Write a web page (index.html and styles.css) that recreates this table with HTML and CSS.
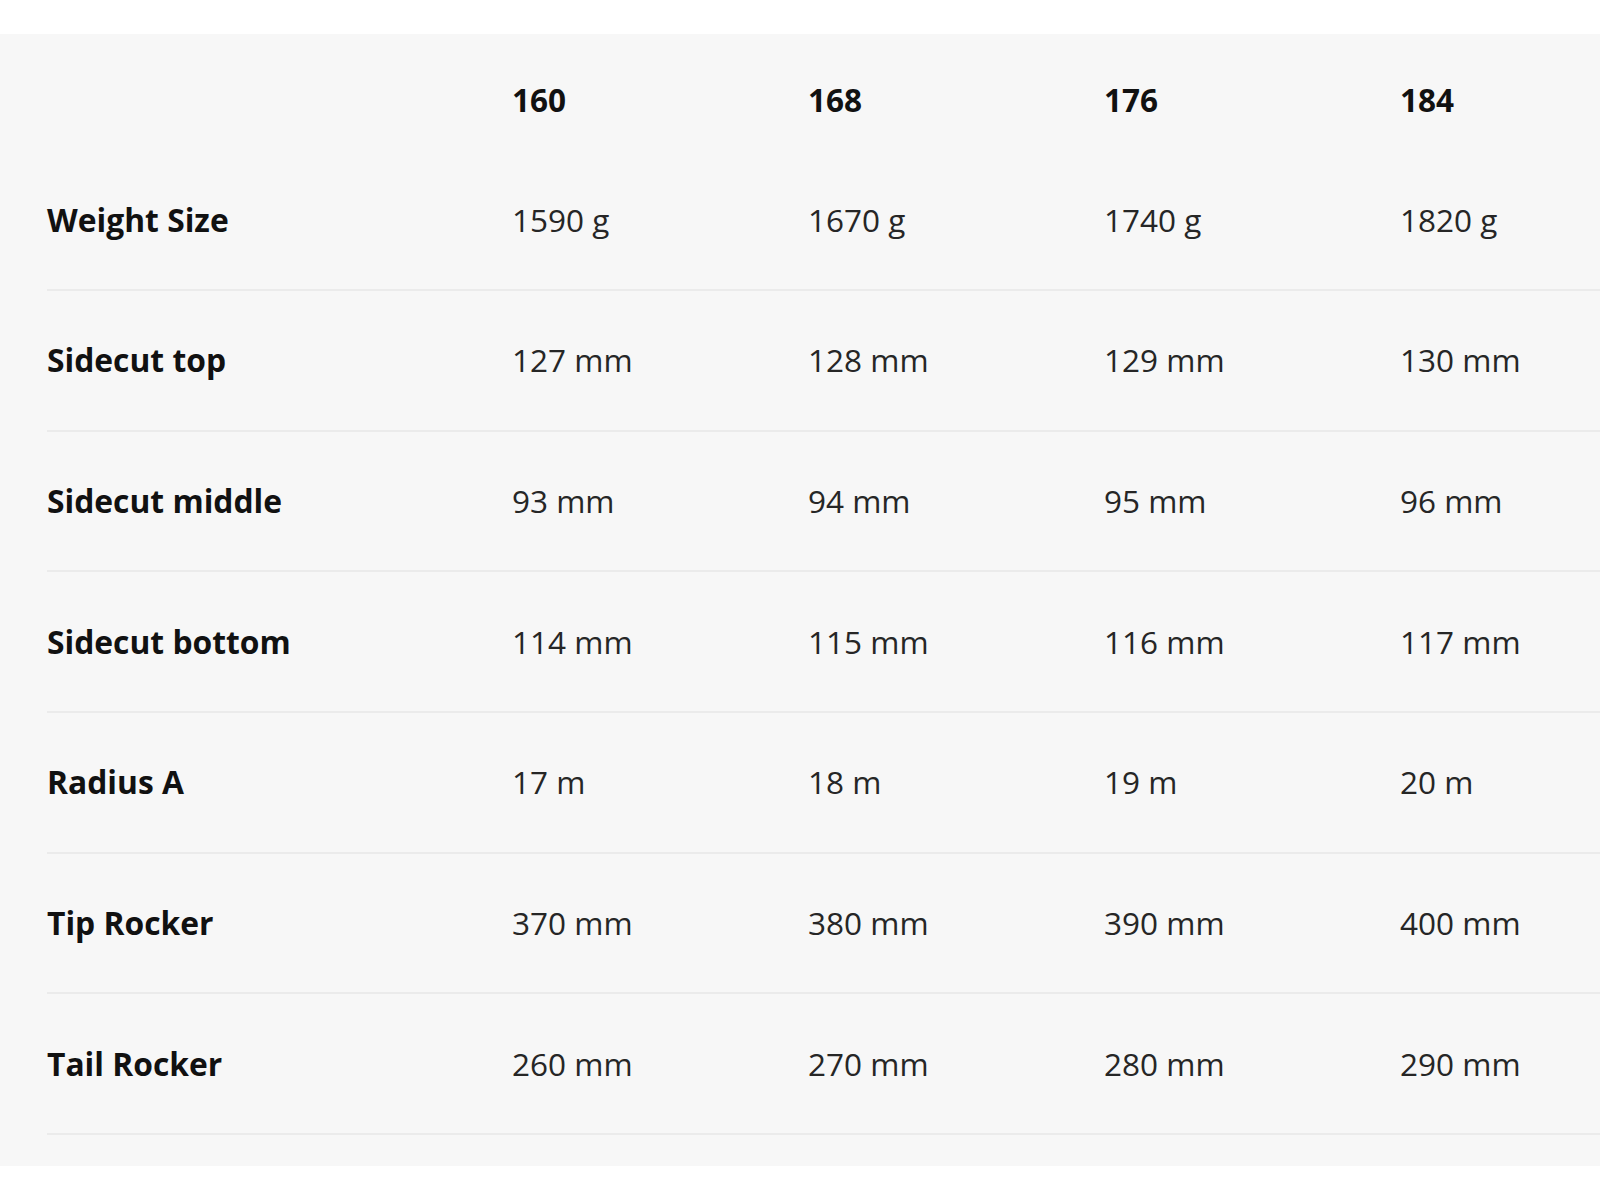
FILE: index.html
```html
<!DOCTYPE html>
<html lang="en">
<head>
<meta charset="utf-8">
<title>Specifications</title>
<link rel="stylesheet" href="styles.css">
</head>
<body>
<section class="specs">
  <div class="row head">
    <div class="cell"></div>
    <div class="cell">160</div>
    <div class="cell">168</div>
    <div class="cell">176</div>
    <div class="cell">184</div>
  </div>
  <div class="row">
    <div class="cell label">Weight Size</div>
    <div class="cell">1590 g</div>
    <div class="cell">1670 g</div>
    <div class="cell">1740 g</div>
    <div class="cell">1820 g</div>
  </div>
  <div class="row">
    <div class="cell label">Sidecut top</div>
    <div class="cell">127 mm</div>
    <div class="cell">128 mm</div>
    <div class="cell">129 mm</div>
    <div class="cell">130 mm</div>
  </div>
  <div class="row">
    <div class="cell label">Sidecut middle</div>
    <div class="cell">93 mm</div>
    <div class="cell">94 mm</div>
    <div class="cell">95 mm</div>
    <div class="cell">96 mm</div>
  </div>
  <div class="row">
    <div class="cell label">Sidecut bottom</div>
    <div class="cell">114 mm</div>
    <div class="cell">115 mm</div>
    <div class="cell">116 mm</div>
    <div class="cell">117 mm</div>
  </div>
  <div class="row">
    <div class="cell label">Radius A</div>
    <div class="cell">17 m</div>
    <div class="cell">18 m</div>
    <div class="cell">19 m</div>
    <div class="cell">20 m</div>
  </div>
  <div class="row">
    <div class="cell label">Tip Rocker</div>
    <div class="cell">370 mm</div>
    <div class="cell">380 mm</div>
    <div class="cell">390 mm</div>
    <div class="cell">400 mm</div>
  </div>
  <div class="row">
    <div class="cell label">Tail Rocker</div>
    <div class="cell">260 mm</div>
    <div class="cell">270 mm</div>
    <div class="cell">280 mm</div>
    <div class="cell">290 mm</div>
  </div>
</section>
</body>
</html>
```
FILE: styles.css
```css
html, body {
  margin: 0;
  padding: 0;
  background: #ffffff;
}

body {
  font-family: "Open Sans", "Liberation Sans", sans-serif;
  font-size: 31.5px;
  line-height: 40px;
  color: #262626;
  overflow: hidden;
}

.specs {
  margin-top: 34px;
  background: #f7f7f7;
  padding: 0 0 31px 47px;
}

.row {
  display: grid;
  grid-template-columns: 465px 296px 296px 296px 1fr;
  align-items: center;
  height: 140.67px;
  box-sizing: border-box;
  border-bottom: 2px solid #ebebeb;
}

.row.head {
  height: 116.3px;
  align-items: start;
  padding-top: 46px;
  border-bottom: none;
  font-weight: 700;
  color: #111111;
}

.cell {
  white-space: nowrap;
}

.label {
  font-size: 31.8px;
  font-weight: 700;
  color: #111111;
}
```
